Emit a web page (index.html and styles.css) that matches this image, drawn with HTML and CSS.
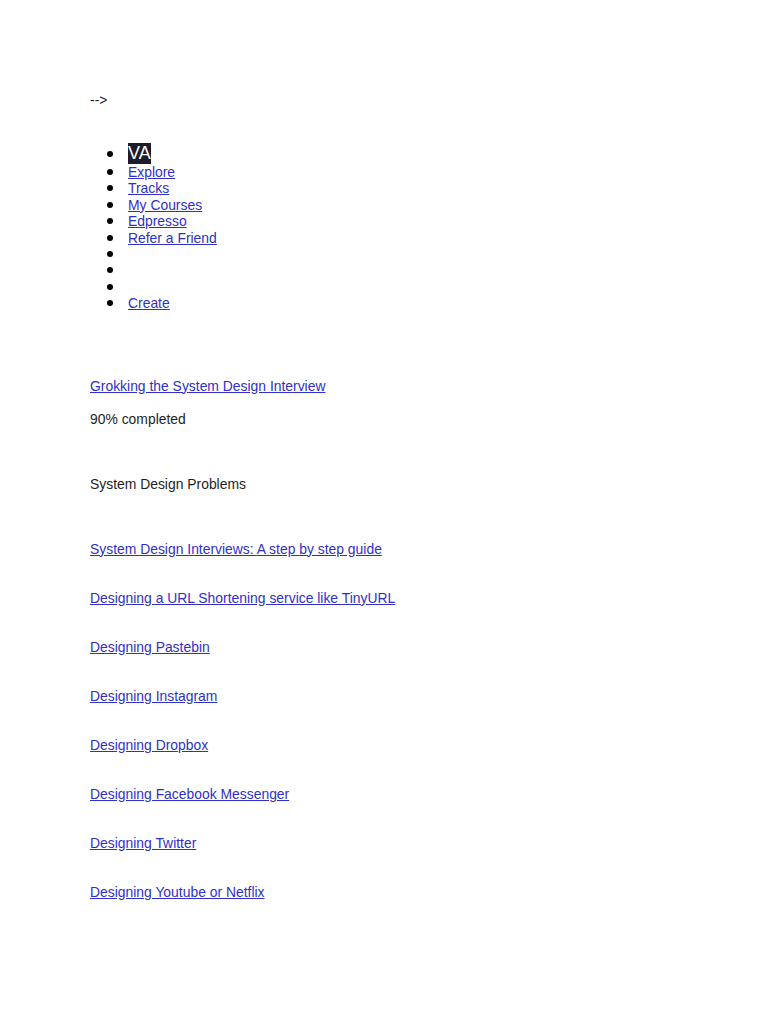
FILE: index.html
```html
<!DOCTYPE html>
<html>
<head>
<meta charset="utf-8">
<link rel="stylesheet" href="styles.css">
</head>
<body>
<div class="page">
  <div class="stray">--&gt;</div>
  <ul class="nav">
    <li><span class="avatar">VA</span></li>
    <li><a href="#">Explore</a></li>
    <li><a href="#">Tracks</a></li>
    <li><a href="#">My Courses</a></li>
    <li><a href="#">Edpresso</a></li>
    <li><a href="#">Refer a Friend</a></li>
    <li></li>
    <li></li>
    <li></li>
    <li><a href="#">Create</a></li>
  </ul>
  <p class="course"><a href="#">Grokking the System Design Interview</a></p>
  <p class="progress">90% completed</p>
  <p class="section">System Design Problems</p>
  <div class="lessons">
    <p><a href="#">System Design Interviews: A step by step guide</a></p>
    <p><a href="#">Designing a URL Shortening service like TinyURL</a></p>
    <p><a href="#">Designing Pastebin</a></p>
    <p><a href="#">Designing Instagram</a></p>
    <p><a href="#">Designing Dropbox</a></p>
    <p><a href="#">Designing Facebook Messenger</a></p>
    <p><a href="#">Designing Twitter</a></p>
    <p><a href="#">Designing Youtube or Netflix</a></p>
  </div>
</div>
</body>
</html>
```
FILE: styles.css
```css
html, body {
  margin: 0;
  padding: 0;
  background: #ffffff;
}
.page {
  padding: 92px 0 0 90px;
  font-family: "Liberation Sans", Arial, sans-serif;
  font-size: 13.9px;
  line-height: 16.4px;
  color: #1e1e1e;
}
a {
  color: #3030c8;
  text-decoration: underline;
}
.stray {
  margin: 0;
}
.nav {
  margin: 35px 0 0 0;
  padding-left: 38px;
  list-style: none;
}
.nav li {
  position: relative;
  min-height: 16.4px;
}
.nav li::before {
  content: "";
  position: absolute;
  left: -21px;
  top: 5px;
  width: 6px;
  height: 6px;
  border-radius: 50%;
  background: #000000;
}
.nav li:first-child::before {
  top: 8px;
}
.avatar {
  display: inline-block;
  font-size: 18px;
  line-height: 20.5px;
  background: #1c1c2b;
  color: #ffffff;
  vertical-align: top;
}
.nav li:first-child {
  line-height: 20px;
}
.course {
  margin: 66px 0 0 0;
}
.progress {
  margin: 16.6px 0 0 0;
}
.section {
  margin: 48.6px 0 0 0;
}
.lessons {
  margin-top: 48.6px;
}
.lessons p {
  margin: 0 0 32.7px 0;
}
```
